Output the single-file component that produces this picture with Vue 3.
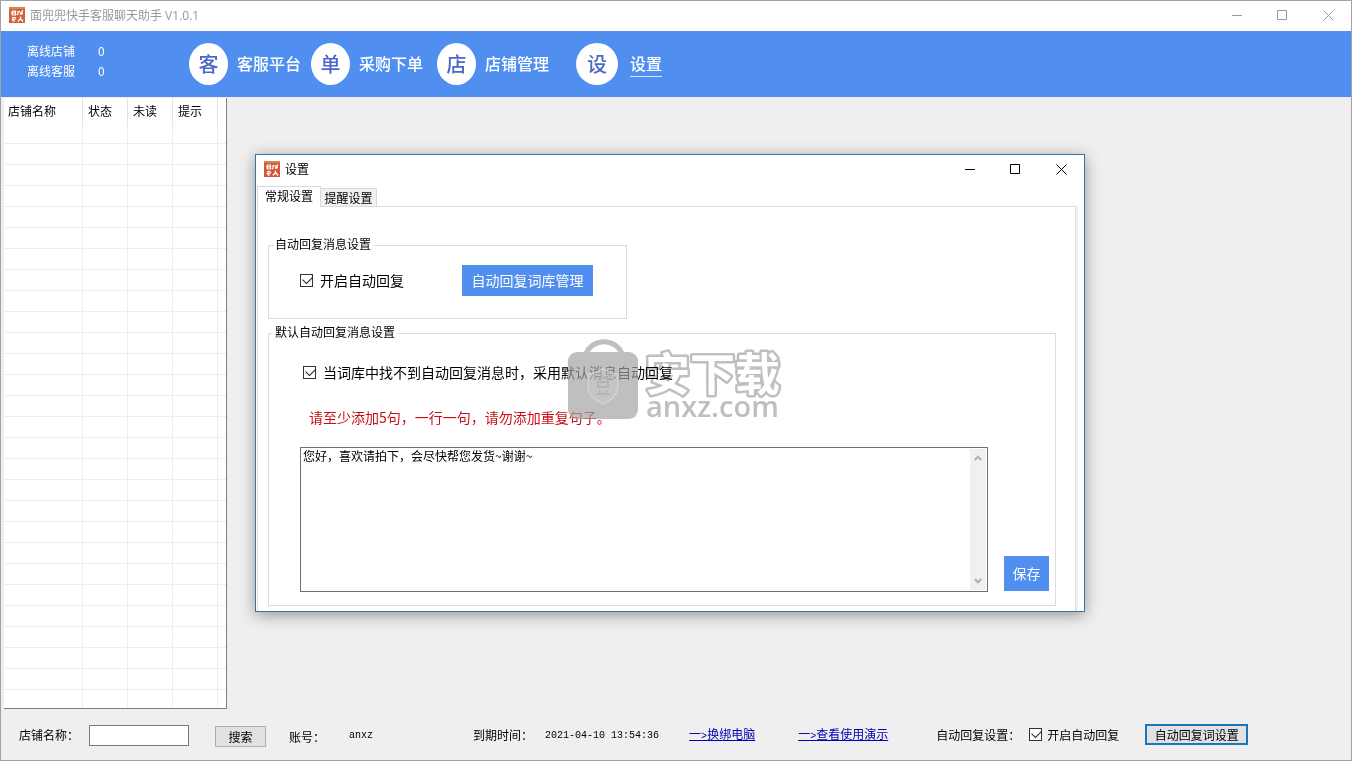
<script setup>
import { ref } from 'vue'

const columns = ['店铺名称', '状态', '未读', '提示']
const rowCount = 27
const navItems = [
  { badge: '客', label: '客服平台' },
  { badge: '单', label: '采购下单' },
  { badge: '店', label: '店铺管理' },
  { badge: '设', label: '设置', current: true },
]

const shopName = ref('')
const autoReply = ref(true)
const useDefault = ref(true)
const messages = ref('您好，喜欢请拍下，会尽快帮您发货~谢谢~')
const activeTab = ref('常规设置')
const tabs = ['常规设置', '提醒设置']
</script>

<template>
  <div class="app">
    <header class="titlebar">
      <svg class="logo" viewBox="0 0 16 16" aria-hidden="true">
        <rect width="16" height="16" fill="#d4603c" />
        <rect width="16" height="2" fill="#c98a4c" />
        <path d="M3 4v4M3 4h3.500v1.800H3M3 8h3.500V6M9 4.500h2M9 4v3l-1 1M11 6.500l3-3M13 4v3.500M11 7.500l3-1M3 10.500h3.500M2.500 12.500h3.500M4 10v4h2M6 12l1-1M11.500 9.500v2l-2.500 3M11.500 11.500l2.500 3" fill="none" stroke="#fff" stroke-width="1.200" />
      </svg>
      <h1 class="title">面兜兜快手客服聊天助手 V1.0.1</h1>
      <div class="winctl">
        <button type="button" aria-label="最小化"><svg viewBox="0 0 11 11"><path d="M0 5.500h10" /></svg></button>
        <button type="button" aria-label="最大化"><svg viewBox="0 0 11 11"><path d="M.5.5h9v9H.5z" /></svg></button>
        <button type="button" aria-label="关闭"><svg viewBox="0 0 11 11"><path d="M.5.5l10 10M10.500.5l-10 10" /></svg></button>
      </div>
    </header>

    <div class="banner">
      <dl class="stats">
        <dt>离线店铺</dt><dd>0</dd>
        <dt>离线客服</dt><dd>0</dd>
      </dl>
      <nav class="nav">
        <button v-for="item in navItems" :key="item.label" type="button" class="nav-item" :class="{ current: item.current }">
          <span class="badge">{{ item.badge }}</span>
          <span class="nav-label">{{ item.label }}</span>
        </button>
      </nav>
    </div>

    <main class="main">
      <div class="shops">
        <table>
          <colgroup><col class="c-name"><col class="c-s"><col class="c-s"><col class="c-s"><col></colgroup>
          <thead>
            <tr><th v-for="c in columns" :key="c" scope="col">{{ c }}</th><td></td></tr>
          </thead>
          <tbody>
            <tr v-for="r in rowCount" :key="r"><td v-for="n in 5" :key="n"></td></tr>
            <tr class="tail"><td v-for="n in 5" :key="n"></td></tr>
          </tbody>
        </table>
      </div>
    </main>

    <footer class="footer">
      <label for="shop">店铺名称：</label>
      <input id="shop" v-model="shopName" class="shop-input" type="text">
      <button type="button" class="btn search">搜索</button>
      <span class="account-label">账号：</span>
      <span class="mono account">anxz</span>
      <span class="expire-label">到期时间：</span>
      <span class="mono expire">2021-04-10 13:54:36</span>
      <a href="#rebind" class="rebind">一<span class="mono">&gt;</span>换绑电脑</a>
      <a href="#demo" class="demo">一<span class="mono">&gt;</span>查看使用演示</a>
      <span class="auto-label">自动回复设置：</span>
      <label class="check small"><input v-model="autoReply" type="checkbox"><span>开启自动回复</span></label>
      <button type="button" class="btn focus">自动回复词设置</button>
    </footer>

    <section class="dialog" role="dialog" aria-labelledby="dlg-title">
      <div class="titlebar dialog-title">
        <svg class="logo" viewBox="0 0 16 16" aria-hidden="true">
          <rect width="16" height="16" fill="#d4553a" />
          <rect width="16" height="2" fill="#c98a4c" />
          <path d="M3 4v4M3 4h3.500v1.800H3M3 8h3.500V6M9 4.500h2M9 4v3l-1 1M11 6.500l3-3M13 4v3.500M11 7.500l3-1M3 10.500h3.500M2.500 12.500h3.500M4 10v4h2M6 12l1-1M11.500 9.500v2l-2.500 3M11.500 11.500l2.500 3" fill="none" stroke="#fff" stroke-width="1.200" />
        </svg>
        <h2 id="dlg-title" class="title">设置</h2>
        <div class="winctl">
          <button type="button" aria-label="最小化"><svg viewBox="0 0 11 11"><path d="M0 5.500h10" /></svg></button>
          <button type="button" aria-label="最大化"><svg viewBox="0 0 11 11"><path d="M.5.5h9v9H.5z" /></svg></button>
          <button type="button" aria-label="关闭"><svg viewBox="0 0 11 11"><path d="M.5.5l10 10M10.500.5l-10 10" /></svg></button>
        </div>
      </div>
      <div class="tabs" role="tablist">
        <button v-for="t in tabs" :key="t" type="button" role="tab" class="tab" :class="{ active: t === activeTab }" :aria-selected="t === activeTab" @click="activeTab = t">{{ t }}</button>
      </div>
      <div class="pane" role="tabpanel">
        <fieldset class="group auto">
          <legend>自动回复消息设置</legend>
          <div class="auto-row">
            <label class="check"><input v-model="autoReply" type="checkbox"><span>开启自动回复</span></label>
            <button type="button" class="primary">自动回复词库管理</button>
          </div>
        </fieldset>
        <fieldset class="group default">
          <legend>默认自动回复消息设置</legend>
          <label class="check default-check"><input v-model="useDefault" type="checkbox"><span>当词库中找不到自动回复消息时，采用默认消息自动回复</span></label>
          <p class="hint">请至少添加5句，一行一句，请勿添加重复句子。</p>
          <div class="edit-row">
            <div class="editor">
              <textarea v-model="messages" aria-label="默认自动回复消息"></textarea>
              <div class="scroll" aria-hidden="true">
                <svg viewBox="0 0 8 6"><path d="M.7 5L4 1.700 7.300 5" /></svg>
                <svg viewBox="0 0 8 6"><path d="M.7 1L4 4.300 7.300 1" /></svg>
              </div>
            </div>
            <button type="button" class="primary save">保存</button>
          </div>
        </fieldset>
      </div>

      <div class="watermark" aria-hidden="true">
        <svg class="bag" viewBox="0 0 72 82" width="72" height="82">
          <g opacity=".69">
            <path d="M17.500 17A19.500 19.500 0 0 1 54.500 17" fill="none" stroke="#a3a3a3" stroke-width="5" />
            <rect x="0" y="14" width="70" height="67" rx="9" fill="#a3a3a3" />
          </g>
          <path d="M35 30q8 6 15 6v12q0 11-15 18q-15-7-15-18V36q7 0 15-6z" fill="#d0d0d0" fill-opacity=".4" stroke="#d2d2d2" stroke-width="1.500" />
          <path d="M28 40h14M30 44h10v5H30zM31 52l1 3M39 52l-1 3M28 56h14" fill="none" stroke="#b4b4b4" stroke-width="2" />
        </svg>
        <svg class="wordmark" viewBox="0 0 142 82" width="142" height="82">
          <text class="wm-name" x="3" y="53">安下载</text>
          <text class="wm-site" x="4" y="79">anxz.com</text>
        </svg>
      </div>
    </section>
  </div>
</template>

<style>
body { margin: 0; background: #efefef; }
</style>

<style scoped>
.app, .app * { box-sizing: border-box; }
.app {
  position: relative;
  display: flex;
  flex-direction: column;
  min-height: 100vh;
  border: 1px solid #a2a2a2;
  background: #efefef;
  color: #000;
  font: 12px/16px "Noto Sans CJK SC", "Noto Sans", sans-serif;
}
button, input, textarea { font: inherit; color: inherit; margin: 0; }
button { padding: 0; white-space: nowrap; }
.titlebar { display: flex; align-items: center; height: 30px; padding-left: 8px; background: #fff; color: #999; }
.logo { width: 16px; height: 16px; margin: 0 5px 2px 0; }
.title { margin: 0; font-family: "Open Sans", "Noto Sans CJK SC", sans-serif; font-size: 12px; font-weight: 400; }
.winctl { display: flex; align-self: stretch; margin-left: auto; }
.winctl button { display: flex; align-items: center; justify-content: center; width: 45px; padding-bottom: 1px; border: 0; background: none; }
.winctl button:last-child { width: 46px; }
.winctl svg { width: 11px; height: 11px; fill: none; stroke: currentColor; }

.banner { display: flex; align-items: center; height: 66px; padding-left: 26px; background: #508fef; color: #fff; }
.stats { display: grid; grid-template-columns: 71px 91px; line-height: 20px; margin: 0 0 6px; }
.stats dd { margin: 0; }
.nav { display: flex; align-items: center; gap: 10px; }
.nav-item { display: flex; align-items: center; gap: 9px; border: 0; background: none; font-size: 16px; font-weight: 500; line-height: 22px; }
.badge { width: 39px; height: 42px; border-radius: 50%; background: #fff; color: #4b66c8; font-size: 20px; line-height: 42px; text-align: center; }
.nav-label { padding-bottom: 2px; }
.nav-item:nth-child(3) { margin-left: 4px; }
.nav-item.current { margin-left: 17px; gap: 12px; }
.current .badge { width: 42px; }
.current .nav-label { border-bottom: 1px solid #d9e8ff; }

.main { flex: 1; padding: 1px 0 0 3px; }
.shops { width: 223px; background: #fff; border-right: 1px solid #808080; border-bottom: 1px solid #808080; }
table { width: 100%; table-layout: fixed; border-collapse: separate; border-spacing: 0; }
.c-name { width: 79px; }
.c-s { width: 45px; }
th, td { padding: 0; }
th { height: 25px; padding-left: 5px; border-right: 1px solid #e3e3e3; font-weight: 400; text-align: left; }
th:first-child { padding-left: 4px; }
tbody td { height: 21px; border-right: 1px solid #ededed; border-bottom: 1px solid #ededed; }
tbody td:last-child { border-right: 0; }
.tail td { height: 18px; border-bottom: 0; }

.footer { display: flex; align-items: center; height: 51px; padding-left: 18px; white-space: nowrap; }
.mono { font-family: "Liberation Mono", monospace; font-size: 10px; }
.shop-input { width: 100px; height: 21px; margin-top: 2px; margin-left: 10px; padding: 0 2px; border: 1px solid #7a7a7a; background: #fff; }
.btn { height: 21px; border: 1px solid #adadad; background: #e1e1e1; line-height: 16px; }
.search { width: 51px; margin-top: 4px; margin-left: 26px; }
.account-label { margin-top: 4px; margin-left: 23px; }
.account { margin-top: 2px; margin-left: 24px; }
.expire-label { margin-left: 100px; }
.expire { margin-top: 2px; margin-left: 12px; }
a { padding-top: 2px; color: #0000b4; text-decoration: underline; }
.rebind { margin-left: 30px; }
.demo { margin-left: 43px; }
.auto-label { margin-left: 48px; }
.small { margin-left: 9px; }
.focus { width: 103px; border: 2px solid #1a75bb; line-height: 15px; margin-left: 26px; }

.check { display: inline-flex; align-items: center; gap: 7px; font-size: 14px; line-height: 20px; }
.check.small { gap: 5px; font-size: 12px; line-height: 16px; }
.check input { position: relative; appearance: none; width: 13px; height: 13px; border: 1px solid #333; background: #fff; }
.check input:checked::after {
  content: "";
  position: absolute;
  left: 2px;
  top: 1px;
  width: 8px;
  height: 5px;
  border-left: 1px solid #222;
  border-bottom: 1px solid #222;
  transform: rotate(-45deg);
}

.dialog {
  position: absolute;
  top: 153px;
  left: 254px;
  right: 266px;
  min-width: 640px;
  border: 1px solid #2f78b0;
  background: #fff;
  box-shadow: 0 3px 14px rgba(0, 0, 0, .38);
}
.dialog-title { height: 29px; color: #000; }
.tabs { display: flex; align-items: flex-end; height: 22px; padding-left: 1px; }
.tab { width: 56px; height: 18px; border: 1px solid #d9d9d9; border-bottom: 0; border-left: 0; background: #f0f0f0; line-height: 16px; }
.tab.active { position: relative; width: 64px; height: 21px; margin-bottom: -1px; padding-bottom: 2px; border-left: 1px solid #d9d9d9; background: #fff; }
.pane { margin: 0 8px 0 1px; padding: 30px 19px 5px 10px; border: 1px solid #dcdcdc; border-bottom: 0; box-shadow: 2px 0 0 #f0f0f0; }
.group { min-width: 0; margin: 0; padding: 0; border: 1px solid #dcdcdc; }
legend { margin-left: 4px; padding: 0 2px 2px; line-height: 14px; }
.auto { width: 359px; }
.auto-row { display: flex; align-items: center; gap: 58px; padding: 12px 0 22px 31px; }
.auto-row .check span { padding-bottom: 2px; }
.primary { width: 131px; height: 31px; padding-bottom: 2px; border: 0; background: #508fef; color: #fff; font-size: 14px; }
.default { margin-top: 6px; }
.default-check { display: flex; margin: 21px 0 0 34px; }
.hint { margin: 25px 0 0 40px; color: #c80f14; font-size: 14px; line-height: 20px; }
.edit-row { display: flex; align-items: flex-end; gap: 16px; padding: 20px 6px 13px 31px; }
.editor { display: flex; flex: 1; height: 145px; padding: 1px; border: 1px solid #707070; background: #fff; }
textarea { flex: 1; min-width: 0; padding: 0 1px; border: 0; outline: 0; resize: none; overflow: hidden; background: transparent; line-height: 14px; }
.scroll { display: flex; flex-direction: column; justify-content: space-between; align-items: center; width: 16px; padding: 6px 0; background: #f0f0f0; }
.scroll svg { width: 8px; height: 6px; fill: none; stroke: #b0b0b0; stroke-width: 2; }
.save { width: 45px; height: 35px; margin-bottom: 1px; }

.watermark { position: absolute; top: 183px; left: 312px; display: flex; gap: 2px; pointer-events: none; }
.wordmark { overflow: visible; mix-blend-mode: multiply; }
.wm-name {
  fill: #fff;
  stroke: #bfbfbf;
  stroke-width: 5px;
  stroke-linejoin: round;
  paint-order: stroke;
  font-family: "Noto Sans CJK SC", sans-serif;
  font-size: 45px;
  font-weight: 700;
}
.wm-site { fill: #bfbfbf; font-family: "Open Sans", sans-serif; font-size: 29px; font-weight: 600; }
</style>
